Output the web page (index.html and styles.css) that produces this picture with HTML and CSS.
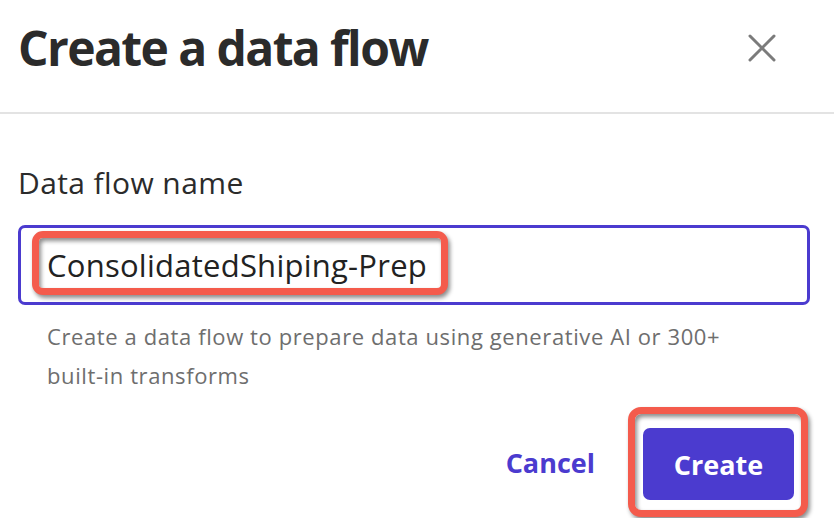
FILE: index.html
```html
<!DOCTYPE html>
<html lang="en">
<head>
<meta charset="utf-8">
<title>Create a data flow</title>
<link rel="stylesheet" href="styles.css">
</head>
<body>
<div class="modal">
  <header class="modal-header">
    <h1 class="modal-title">Create a data flow</h1>
    <button class="close-btn" aria-label="Close">
      <svg width="28" height="28" viewBox="0 0 28 28" aria-hidden="true">
        <path d="M2 2 L26 26 M26 2 L2 26" stroke="#7b7b7b" stroke-width="3" stroke-linecap="round" fill="none"/>
      </svg>
    </button>
  </header>
  <section class="modal-body">
    <label class="field-label" for="flowname">Data flow name</label>
    <div class="input-box">
      <div class="highlight highlight-input">
        <span class="input-value" id="flowname">ConsolidatedShiping-Prep</span>
      </div>
    </div>
    <p class="helper">Create a data flow to prepare data using generative AI or 300+ built-in transforms</p>
    <div class="actions">
      <a class="cancel" href="#">Cancel</a>
      <div class="highlight highlight-btn">
        <button class="primary">Create</button>
      </div>
    </div>
  </section>
</div>
</body>
</html>
```

FILE: styles.css
```css
* { box-sizing: border-box; }
html, body { margin: 0; padding: 0; background: #ffffff; }
body {
  font-family: "Open Sans", "Noto Sans", sans-serif;
  color: #2b2b2b;
  overflow: hidden;
}
.modal { width: 834px; height: 518px; }
.modal-header {
  height: 114px;
  padding: 18px 58px 0 18px;
  display: flex;
  justify-content: space-between;
  align-items: flex-start;
  border-bottom: 2px solid #e3e3e3;
}
.modal-title {
  margin: 0;
  font-size: 48px;
  line-height: 60px;
  font-weight: 700;
  color: #2b2b2b;
  letter-spacing: -1.6px;
}
.close-btn {
  margin-top: 16px;
  width: 28px;
  height: 28px;
  padding: 0;
  border: 0;
  background: none;
  display: block;
}
.close-btn svg { display: block; }
.modal-body {
  padding: 51px 24px 0 18px;
}
.field-label {
  display: block;
  font-size: 30px;
  line-height: 36px;
  letter-spacing: 0.4px;
  color: #2b2b2b;
}
.input-box {
  margin-top: 24px;
  height: 80px;
  border: 3px solid #4b3bcf;
  border-radius: 7px;
  padding: 3px 0 7px 11px;
}
.highlight {
  border: 7px solid #f45b4c;
  border-radius: 11px;
  box-shadow: 2px 3px 4px rgba(0,0,0,0.45), inset 2px 3px 4px rgba(0,0,0,0.45);
  background: #fff;
}
.highlight-input {
  width: 416px;
  height: 64px;
  padding: 5px 0 0 8px;
}
.input-value {
  display: block;
  font-size: 31px;
  line-height: 45px;
  letter-spacing: 0.25px;
  color: #222;
}
.helper {
  margin: 12px 0 0 29px;
  width: 700px;
  font-size: 22px;
  line-height: 39px;
  letter-spacing: 0.6px;
  color: #6e6e6e;
}
.actions {
  margin-top: 12px;
  display: flex;
  justify-content: flex-end;
  align-items: center;
  gap: 33px;
  margin-right: 2px;
}
.cancel {
  font-size: 27px;
  font-weight: 700;
  color: #4b3bcf;
  text-decoration: none;
}
.highlight-btn {
  padding: 14px 7px 10px 8px;
  border-radius: 13px;
}
.primary {
  display: block;
  width: 151px;
  height: 72px;
  border: 0;
  border-radius: 7px;
  background: #4b3bcf;
  color: #fff;
  font-family: inherit;
  font-size: 27px;
  font-weight: 700;
}
```
